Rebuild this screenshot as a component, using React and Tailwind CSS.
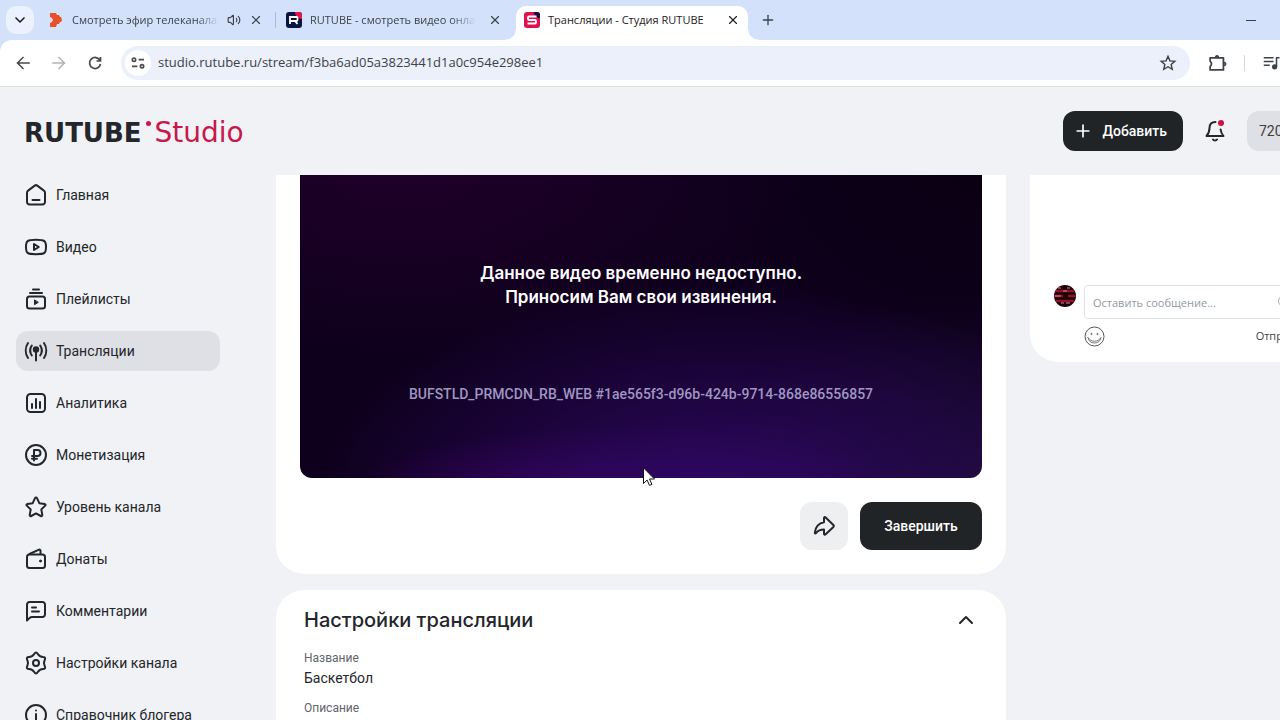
import React, { useState } from "react";
import { ChevronDown, ChevronUp, Plus, Volume2, X } from "lucide-react";

const Icon = ({ children, className = "size-6" }) => (
  <svg
    viewBox="0 0 24 24"
    className={`shrink-0 ${className}`}
    fill="none"
    stroke="currentColor"
    strokeWidth="2"
    strokeLinecap="round"
    strokeLinejoin="round"
    aria-hidden="true"
  >
    {children}
  </svg>
);

const menu = [
  {
    label: "Главная",
    icon: (
      <>
        <path d="M3 9.8c0-.9.4-1.700 1.100-2.200l6.600-5c.8-.6 1.800-.6 2.600 0l6.600 5c.7.500 1.100 1.300 1.100 2.200V19a2.500 2.500 0 0 1-2.500 2.500h-13A2.500 2.500 0 0 1 3 19z" />
        <path d="M8.500 17h7" />
      </>
    ),
  },
  {
    label: "Видео",
    icon: (
      <>
        <path d="M2 12c0-6 1-7.200 10-7.200S22 6 22 12s-1 7.200-10 7.200S2 18 2 12z" />
        <path d="M10 9v6l4.800-3z" />
      </>
    ),
  },
  {
    label: "Плейлисты",
    icon: (
      <>
        <path d="M9 2.500h6M6 6h12" />
        <rect x="3" y="9.500" width="18" height="12" rx="2.500" />
        <path d="M10.500 13.300v4.400l3.500-2.200z" fill="currentColor" strokeWidth="1" />
      </>
    ),
  },
  {
    label: "Трансляции",
    active: true,
    icon: (
      <>
        <path d="M4 4c-3 4.500-3 10.500 0 15M20 4c3 4.500 3 10.500 0 15M7.800 6.500c-2 3-2 7 0 10M16.200 6.500c2 3 2 7 0 10M12 12v9.500" />
        <circle cx="12" cy="10.500" r="2.200" fill="currentColor" />
      </>
    ),
  },
  {
    label: "Аналитика",
    icon: (
      <>
        <rect x="3" y="3" width="18" height="18" rx="3.500" />
        <path d="M8 13v4M12 8v9M16 11v6" />
      </>
    ),
  },
  {
    label: "Монетизация",
    icon: (
      <>
        <circle cx="12" cy="12" r="10" />
        <path d="M10 17.500V7h3.500a3 3 0 0 1 0 6H8M8 15.700h5" />
      </>
    ),
  },
  {
    label: "Уровень канала",
    icon: (
      <path d="M12 2.500c.4 0 .8.200 1 .7l2.300 5 5.300.7c.9.100 1.200 1.100.6 1.700l-3.900 3.800 1 5.500c.1.900-.7 1.500-1.500 1.100L12 18.400 7.200 21c-.8.400-1.600-.2-1.500-1.100l1-5.500-3.900-3.800c-.6-.6-.3-1.600.6-1.700l5.300-.7 2.300-5c.2-.5.6-.7 1-.7z" />
    ),
  },
  {
    label: "Донаты",
    icon: (
      <>
        <rect x="3" y="7.500" width="18" height="13.500" rx="2.500" />
        <path d="M5.500 7 15 2.700c.8-.3 1.500.1 1.500.9V7" />
        <circle cx="16.500" cy="14" r="1" fill="currentColor" strokeWidth="1" />
      </>
    ),
  },
  {
    label: "Комментарии",
    icon: (
      <>
        <path d="M3 21.500V5.500A2.500 2.500 0 0 1 5.500 3h13A2.500 2.500 0 0 1 21 5.500v10a2.500 2.500 0 0 1-2.500 2.500H8c-1 0-1.700.3-2.400.9z" />
        <path d="M8 8.500h4M8 12.500h7" />
      </>
    ),
  },
  {
    label: "Настройки канала",
    icon: (
      <>
        <path d="M10.200 3Q12 .2 13.800 3T18.900 6Q22.200 6.100 20.700 9T20.700 15Q22.200 17.900 18.900 18T13.800 21Q12 23.800 10.200 21T5.100 18Q1.800 17.900 3.300 15T3.300 9Q1.800 6.100 5.100 6T10.200 3z" />
        <circle cx="12" cy="12" r="3" />
      </>
    ),
  },
  {
    label: "Справочник блогера",
    icon: (
      <>
        <circle cx="12" cy="12" r="10" />
        <path d="M12 11v6M12 7.500v.1" />
      </>
    ),
  },
];

const Favicon = ({ type }) => {
  if (type === "match") {
    return (
      <svg viewBox="0 0 16 16" className="size-4 shrink-0" aria-hidden="true">
        <path d="M2 1h6l1 2h2l1 2h1l1 3-1 2h-1l-1 2H9l-1 3H2v-4l2-1 1-2-1-2-2-1z" fill="#e8502b" />
      </svg>
    );
  }
  if (type === "rutube") {
    return (
      <svg viewBox="0 0 16 16" className="size-4 shrink-0" aria-hidden="true">
        <rect width="16" height="16" rx="3" fill="#0c1443" />
        <path d="M9 0h4a3 3 0 0 1 3 3v4C12 7 9 4 9 0z" fill="#e5144c" />
        <path d="M4 12V5h6.500a1 1 0 0 1 1 1v2a1 1 0 0 1-1 1H4m5 0 2.500 3" fill="none" stroke="#fff" strokeWidth="1.800" />
      </svg>
    );
  }
  return (
    <svg viewBox="0 0 16 16" className="size-4 shrink-0" aria-hidden="true">
      <rect width="16" height="16" rx="3" fill="#e0114f" />
      <path d="M10 0h3a3 3 0 0 1 3 3v3c-3 0-6-2-6-6z" fill="#14103f" />
      <path d="M12.500 4.500H5a1 1 0 0 0-1 1V7a1 1 0 0 0 1 1h6a1 1 0 0 1 1 1v1.500a1 1 0 0 1-1 1H3.500" fill="none" stroke="#fff" strokeWidth="1.800" />
    </svg>
  );
};

const Browser = () => (
  <div className="shrink-0 bg-[#d3e1fb] font-['Open_Sans',sans-serif] text-[#3c4249]">
    {/* Tabs */}
    <div className="flex h-10 items-center pl-1.5">
      <button aria-label="Поиск вкладок" className="mr-1.5 flex size-7 items-center justify-center rounded-[10px] bg-[#ebf2fd] text-[#1f2124]">
        <ChevronDown className="size-4" strokeWidth={2.5} />
      </button>

      <div className="flex h-8 w-[235px] items-center gap-2 pl-2 pr-3 text-[11px]">
        <Favicon type="match" />
        <span className="flex-1 overflow-hidden whitespace-nowrap [mask-image:linear-gradient(to_right,black_85%,transparent)]">
          Смотреть эфир телеканала
        </span>
        <Volume2 className="size-3.5 shrink-0" />
        <button aria-label="Закрыть">
          <X className="size-3.5" />
        </button>
      </div>
      <div className="mr-0.5 h-4 w-px bg-[#a9bbdc]"></div>
      <div className="flex h-8 w-[238px] items-center gap-2 pl-2 pr-3.5 text-[11px]">
        <Favicon type="rutube" />
        <span className="mr-1 flex-1 overflow-hidden whitespace-nowrap [mask-image:linear-gradient(to_right,black_85%,transparent)]">
          RUTUBE - смотреть видео онлайн
        </span>
        <button aria-label="Закрыть">
          <X className="size-3.5" />
        </button>
      </div>
      <div className="relative flex h-[34px] w-[232px] items-center gap-2 self-end rounded-t-[10px] bg-white px-2 pb-1.5 text-[11px] text-[#1f2124]">
        <span className="absolute -left-2.5 bottom-0 size-2.5 bg-[radial-gradient(circle_at_0_0,transparent_9px,white_10px)]"></span>
        <span className="absolute -right-2.5 bottom-0 size-2.5 bg-[radial-gradient(circle_at_100%_0,transparent_9px,white_10px)]"></span>
        <Favicon type="studio" />
        <span className="flex-1 whitespace-nowrap">Трансляции - Студия RUTUBE</span>
        <button aria-label="Закрыть">
          <X className="size-3.5" />
        </button>
      </div>
      <button aria-label="Новая вкладка" className="ml-3">
        <Plus className="size-4" />
      </button>
      <button aria-label="Свернуть" className="ml-auto mr-[92px] flex h-10 w-[46px] items-center justify-center">
        <span className="h-px w-2.5 bg-[#3c4249]"></span>
      </button>
    </div>

    {/* Toolbar */}
    <div className="flex h-[47px] items-center rounded-tl-xl border-b border-[#dcdee2] bg-white pl-[11px]">
      <div className="flex w-[110px] items-center gap-3">
        <button aria-label="Назад" className="text-[#474a4e]">
          <Icon>
            <path d="M18 12H6.500M12 6.500 6.500 12l5.500 5.500" strokeWidth="1.500" strokeLinecap="square" strokeLinejoin="miter" />
          </Icon>
        </button>
        <button aria-label="Вперёд" className="text-[#b2b4b8]">
          <Icon>
            <path d="M6 12h11.500M12 6.500l5.500 5.500-5.500 5.500" strokeWidth="1.500" strokeLinecap="square" strokeLinejoin="miter" />
          </Icon>
        </button>
        <button aria-label="Обновить" className="text-[#474a4e]">
          <Icon>
            <path d="M17 9.500A5.500 5.500 0 1 0 17.500 13M17.500 6v4h-4" strokeWidth="1.700" strokeLinecap="butt" strokeLinejoin="miter" />
          </Icon>
        </button>
      </div>
      <div className="flex h-[34px] flex-1 items-center rounded-full bg-[#ecf0fa] pl-1 pr-3">
        <button aria-label="Сведения о сайте" className="flex size-[26px] items-center justify-center rounded-full bg-white text-[#474a4e]">
          <Icon className="size-4">
            <circle cx="6" cy="7" r="2.500" strokeWidth="2.500" />
            <path d="M13 7h8M3 17h8" strokeWidth="2.500" strokeLinecap="butt" />
            <circle cx="18" cy="17" r="2.500" strokeWidth="2.500" />
          </Icon>
        </button>
        <input
          aria-label="Адрес"
          defaultValue="studio.rutube.ru/stream/f3ba6ad05a3823441d1a0c954e298ee1"
          className="ml-[7px] min-w-0 flex-1 bg-transparent text-[13px] outline-none"
        />
        <button aria-label="В закладки">
          <Icon className="size-5">
            <path d="m12 4 2.300 5.400 5.900.5-4.400 3.900 1.300 5.700-5.100-3-5.100 3 1.300-5.700-4.400-3.900 5.900-.5z" strokeWidth="1.700" strokeLinejoin="miter" />
          </Icon>
        </button>
      </div>
      <div className="flex w-[176px] items-center">
        <button aria-label="Расширения" className="ml-4">
          <Icon className="size-[22px]">
            <path d="M4.500 6.500H19v13H4.500v-3.500q3-3 0-6z" strokeWidth="1.900" />
            <path d="M10 5.500a2 1.800 0 0 1 4 0zM20 11a1.800 2 0 0 1 0 4z" fill="currentColor" strokeWidth="1" />
          </Icon>
        </button>
        <span className="ml-4 h-4 w-px bg-[#d3d6dc]"></span>
        <button aria-label="Медиа" className="ml-[18px]">
          <Icon className="size-[18px]">
            <path d="M1 5h13M1 10h13M1 15h8" strokeLinecap="butt" />
            <path d="M18 17V5h4" strokeLinecap="butt" />
            <circle cx="15.500" cy="17" r="2.500" fill="currentColor" />
          </Icon>
        </button>
      </div>
    </div>
  </div>
);

const Header = () => (
  <header className="flex h-[88px] shrink-0 items-center justify-between px-6">
    <a href="#" className="flex items-baseline pt-1 font-['DejaVu_Sans',sans-serif] leading-8">
      <span className="text-[26px] font-bold text-[#23262a]">RUTUBE</span>
      <span className="mx-1 mt-1 size-[5px] self-start rounded-full bg-[#d1134a]"></span>
      <span className="text-[28px] text-[#c8174a]">Studio</span>
    </a>

    <div className="flex items-center">
      <button className="flex h-10 items-center gap-2.5 rounded-xl bg-[#212426] pl-2.5 pr-4 text-sm font-medium text-white">
        <Plus className="size-5" />
        Добавить
      </button>
      <button aria-label="Уведомления" className="relative ml-5">
        <Icon>
          <path d="M12.500 3C8.500 3 6.500 5.500 6.500 9c0 3.500-.8 5.500-3 8h17c-1.600-2-2.600-4-2.900-6.500" />
          <path d="M10 20.500c.8 1.300 3.200 1.300 4 0" />
        </Icon>
        <span className="absolute right-[3px] top-px size-1.5 rounded-full bg-[#c8103f]"></span>
      </button>
      <button className="ml-5 h-10 w-[95px] rounded-xl bg-[#dfe0e5] pl-3 text-left text-sm text-[#3a3d42]">
        720p
      </button>
    </div>
  </header>
);

const Sidebar = () => (
  <nav className="flex w-[204px] shrink-0 flex-col gap-3">
    {menu.map((item) => (
      <a
        key={item.label}
        href="#"
        className={`flex h-10 shrink-0 items-center gap-2 rounded-xl px-2 text-sm ${item.active ? "bg-[#dfe0e5]" : ""}`}
      >
        <Icon>{item.icon}</Icon>
        {item.label}
      </a>
    ))}
  </nav>
);

const Player = () => (
  <div className="rounded-b-[28px] bg-white px-6 pb-6">
    <div className="flex h-[303px] flex-col items-center rounded-b-xl bg-[#0e001c] bg-[radial-gradient(ellipse_60%_70%_at_62%_105%,#2c0860,transparent),radial-gradient(ellipse_40%_20%_at_48%_103%,#3c0060,transparent),radial-gradient(ellipse_60%_60%_at_15%_0%,#1e0028,transparent),radial-gradient(ellipse_40%_60%_at_100%_0%,#0a0012,transparent),radial-gradient(ellipse_40%_60%_at_100%_100%,#1a0c30,transparent)] pt-[86px] text-center">
      <p className="font-['Inter',sans-serif] text-[17px] leading-6 font-semibold text-white">
        Данное видео временно недоступно.
        <br />
        Приносим Вам свои извинения.
      </p>
      <p className="mt-[75px] text-sm font-medium text-[#a096c0]">
        BUFSTLD_PRMCDN_RB_WEB #1ae565f3-d96b-424b-9714-868e86556857
      </p>
    </div>
    <div className="mt-6 flex justify-end gap-3">
      <button aria-label="Поделиться" className="flex size-12 items-center justify-center rounded-xl bg-[#eeeff1]">
        <Icon>
          <path d="M12 8.300V4c0-.8.8-1.200 1.400-.7l8 7.700c.6.600.6 1.300 0 1.900l-8 7.600c-.6.500-1.400.1-1.400-.7v-4.200c-3.600 0-6 .9-8 3.500-.5.600-1.300.4-1.200-.4.500-5.400 3.900-9.900 9.200-10.400z" />
        </Icon>
      </button>
      <button className="h-12 w-[122px] rounded-xl bg-[#212426] text-sm font-medium text-white">Завершить</button>
    </div>
  </div>
);

const Settings = () => {
  const [open, setOpen] = useState(true);

  return (
    <section className="rounded-[28px] bg-white px-7 pt-4 pb-6">
      <button
        onClick={() => setOpen(!open)}
        aria-expanded={open}
        className="flex h-7 w-full items-center justify-between font-['Inter',sans-serif] text-xl font-medium"
      >
        Настройки трансляции
        <ChevronUp className={open ? "size-6" : "size-6 rotate-180"} />
      </button>
      {open && (
        <dl className="mt-4">
          <dt className="text-xs leading-4 text-[#5f656b]">Название</dt>
          <dd className="mb-2.5 text-sm leading-6">Баскетбол</dd>
          <dt className="text-xs leading-4 text-[#5f656b]">Описание</dt>
          <dd className="text-sm leading-6">Прямой эфир</dd>
        </dl>
      )}
    </section>
  );
};

const Chat = () => (
  <aside className="rounded-b-[28px] bg-white px-6 pt-[110px] pb-[15px] font-['Open_Sans',sans-serif] text-[11px]">
    <div className="flex gap-2">
      <svg viewBox="0 0 22 22" className="size-[22px] shrink-0 rounded-full" aria-hidden="true">
        <rect width="22" height="22" fill="#1c0308" />
        <path d="M0 6h22M0 11h9M14 11h8M2 16h18" stroke="#8d1429" strokeWidth="2.500" />
        <path d="M4 3h3M13 3h3M1 11h6M7 18h3M12 18h4M9 6h4" stroke="#e8798a" strokeWidth="1" />
      </svg>
      <div className="min-w-0 flex-1">
        <div className="relative">
          <input
            aria-label="Оставить сообщение"
            placeholder="Оставить сообщение..."
            className="h-[34px] w-full rounded-[4px] border border-[#dfe3e8] px-2 outline-none placeholder:text-[#919aa3]"
          />
          <span className="absolute right-7 top-2.5 h-3 w-3 rounded-full border border-[#aab2ba]"></span>
        </div>
        <div className="mt-1.5 flex items-center justify-between">
          <button aria-label="Эмодзи" className="text-[#55595d]">
            <svg viewBox="0 0 22 22" className="size-[22px]" fill="none" stroke="currentColor" aria-hidden="true">
              <circle cx="10.500" cy="11.500" r="9.500" />
              <path d="M4 12.500c.5 3.500 3 5.500 6.500 5.500s6-2 6.500-5.500c-1.500 2.500-3.700 3.700-6.500 3.700S5.500 15 4 12.500z" strokeWidth="0.800" />
              <circle cx="7.500" cy="9" r="0.600" />
              <circle cx="13.500" cy="9" r="0.600" />
            </svg>
          </button>
          <button className="pr-1 text-[#3f4347]">Отправить</button>
        </div>
      </div>
    </div>
  </aside>
);

export default function App() {
  return (
    <div className="relative h-screen overflow-hidden">
      <div className="flex h-full min-w-[1366px] flex-col bg-[#f0f2f5] font-['Roboto',sans-serif] text-[#23262a]">
        <Browser />
        <Header />
        <div className="flex min-h-0 flex-1 gap-14 overflow-hidden pl-4 pr-6">
          <Sidebar />
          <main className="grid flex-1 grid-cols-[minmax(0,1fr)_312px] items-start gap-6">
            <div className="flex flex-col gap-4">
              <Player />
              <Settings />
            </div>
            <Chat />
          </main>
        </div>
      </div>

      {/* Mouse pointer */}
      <svg viewBox="0 0 12 19" className="absolute left-[643px] top-[467px] h-[19px] w-3" aria-hidden="true">
        <path d="M.5.8v15.700l3.600-3.500 2.400 5.400 2.400-1-2.400-5.400h5z" fill="#fff" stroke="#111" />
      </svg>
    </div>
  );
}
